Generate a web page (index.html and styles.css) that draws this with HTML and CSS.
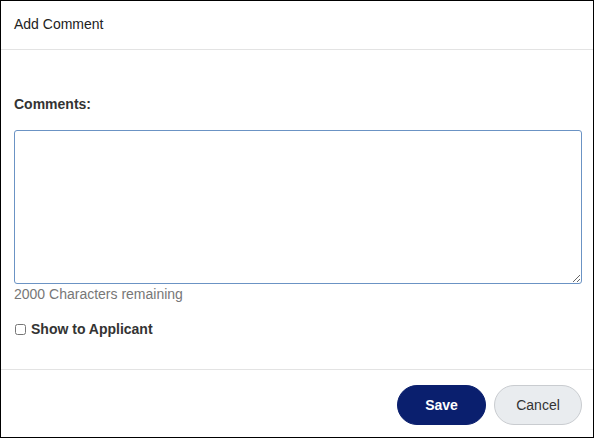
FILE: index.html
```html
<!DOCTYPE html>
<html>
<head>
<meta charset="utf-8">
<link rel="stylesheet" href="styles.css">
</head>
<body>
<div class="dialog">
  <div class="header">Add Comment</div>
  <div class="body">
    <label class="label" for="c">Comments:</label>
    <textarea id="c" class="area"></textarea>
    <div class="remaining">2000 Characters remaining</div>
    <label class="check"><input type="checkbox" class="box"><span>Show to Applicant</span></label>
  </div>
  <div class="footer">
    <button class="btn save">Save</button>
    <button class="btn cancel">Cancel</button>
  </div>
</div>
</body>
</html>
```
FILE: styles.css
```css
* { box-sizing: border-box; }
html, body { margin: 0; padding: 0; background: #fff; }
body { font-family: "Liberation Sans", Arial, sans-serif; font-size: 14px; color: #222; }
.dialog {
  width: 594px;
  height: 438px;
  border: 1px solid #000;
  display: flex;
  flex-direction: column;
}
.header {
  height: 49px;
  border-bottom: 1px solid #e3e3e3;
  padding: 15px 13px 0;
  line-height: 17px;
  color: #222;
}
.body {
  flex: 1;
  padding: 46px 10px 0 13px;
  display: flex;
  flex-direction: column;
}
.label {
  font-weight: bold;
  color: #333;
  line-height: 17px;
  margin-bottom: 17px;
}
.area {
  display: block;
  width: 568px;
  height: 154px;
  border: 1px solid #6b93c4;
  border-radius: 3px;
  resize: vertical;
  font-family: inherit;
  margin: 0;
}
.remaining {
  color: #777;
  line-height: 17px;
  margin-top: 2px;
}
.check {
  display: flex;
  align-items: center;
  margin-top: 18px;
  font-weight: bold;
  color: #333;
  line-height: 17px;
}
.box {
  width: 11px;
  height: 11px;
  margin: 0 5px 0 1px;
}
.footer {
  height: 68px;
  border-top: 1px solid #e3e3e3;
  padding: 15px 11px 0 0;
  display: flex;
  justify-content: flex-end;
  gap: 8px;
}
.btn {
  height: 40px;
  border-radius: 20px;
  font-family: inherit;
  font-size: 14px;
  cursor: pointer;
}
.save {
  width: 89px;
  background: #0a1f6e;
  color: #fff;
  border: 1px solid #0a1f6e;
  font-weight: bold;
}
.cancel {
  width: 88px;
  background: #e9ecef;
  color: #333;
  border: 1px solid #c9ccd0;
}
```
